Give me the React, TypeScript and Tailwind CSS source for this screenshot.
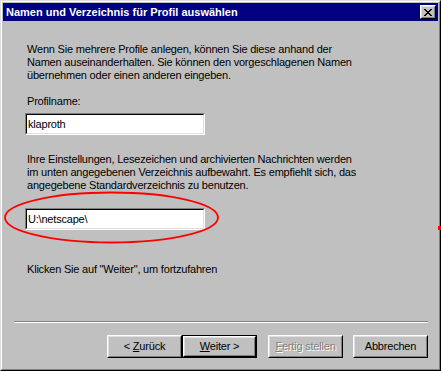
import React from "react";

// Win95-style sunken edit field
function EditField({ value }: { value: string }) {
    return (
        <div className="-ml-[2px] w-[180px] h-[22px] border border-t-[#808080] border-l-[#808080] border-r-white border-b-white">
            <div className="flex h-full items-center border border-t-black border-l-black border-r-[#dfdfdf] border-b-[#dfdfdf] bg-white pl-px">
                {value}
            </div>
        </div>
    );
}

// Raised push button, optional default (black frame) and disabled states
function PushButton({ children, isDefault, disabled, className = "" }: { children: React.ReactNode; isDefault?: boolean; disabled?: boolean; className?: string }) {
    const face = (
        <div className="flex h-full w-full border border-t-white border-l-white border-r-black border-b-black">
            <div className={`flex h-full w-full items-center justify-center border border-t-[#dfdfdf] border-l-[#dfdfdf] border-r-[#808080] border-b-[#808080] ${disabled ? "text-[#808080] [text-shadow:1px_1px_0_#fff]" : ""}`}>
                {children}
            </div>
        </div>
    );
    return (
        <div className={`w-[75px] h-[23px] ${isDefault ? "border border-black" : ""} ${className}`}>
            {face}
        </div>
    );
}

function CloseButton() {
    return (
        <div className="mr-[2px] w-[16px] h-[14px] border border-t-white border-l-white border-r-black border-b-black bg-[#c0c0c0]">
            <div className="flex h-full w-full items-center justify-center border border-t-[#dfdfdf] border-l-[#dfdfdf] border-r-[#808080] border-b-[#808080]">
                <svg width="8" height="7" viewBox="0 0 8 7" shapeRendering="crispEdges">
                    <path d="M0 0h2v1h-2zM6 0h2v1h-2zM1 1h2v1h-2zM5 1h2v1h-2zM2 2h4v1h-4zM3 3h2v1h-2zM2 4h4v1h-4zM1 5h2v1h-2zM5 5h2v1h-2zM0 6h2v1h-2zM6 6h2v1h-2z" fill="#000" />
                </svg>
            </div>
        </div>
    );
}

export default function App() {
    return (
        <div className="relative w-[441px] h-[371px] bg-[#c0c0c0] text-[11px] leading-[13px] text-black font-['Liberation_Sans',Arial,sans-serif] border border-t-[#dfdfdf] border-l-[#dfdfdf] border-r-black border-b-black">
            <div className="flex h-full flex-col border border-t-white border-l-white border-r-[#808080] border-b-[#808080] p-px">
                {/* title bar */}
                <div className="flex h-[18px] shrink-0 items-center justify-between bg-[#000080] pl-[3px]">
                    <span className="font-bold text-white">Namen und Verzeichnis für Profil auswählen</span>
                    <CloseButton />
                </div>

                {/* body */}
                <div className="flex flex-1 flex-col tracking-[-0.2px]">
                    <div className="flex flex-col pl-[24px]">
                        <p className="mt-[22px]">
                            Wenn Sie mehrere Profile anlegen, können Sie diese anhand der<br />
                            Namen auseinanderhalten. Sie können den vorgeschlagenen Namen<br />
                            übernehmen oder einen anderen eingeben.
                        </p>
                        <p className="mt-[13px]">Profilname:</p>
                        <div className="mt-[5px]">
                            <EditField value="klaproth" />
                        </div>
                        <p className="mt-[18px]">
                            Ihre Einstellungen, Lesezeichen und archivierten Nachrichten werden<br />
                            im unten angegebenen Verzeichnis aufbewahrt. Es empfiehlt sich, das<br />
                            angegebene Standardverzeichnis zu benutzen.
                        </p>
                        <div className="mt-[16px]">
                            <EditField value="U:\netscape\" />
                        </div>
                        <p className="mt-[33px]">Klicken Sie auf "Weiter", um fortzufahren</p>
                    </div>

                    {/* etched separator */}
                    <div className="mt-[45px] ml-[11px] mr-[10px] h-[2px] border-t border-t-[#808080] border-b border-b-white" />

                    <div className="mt-[12px] flex justify-end pr-[10px]">
                        <PushButton><span>&lt; <u className="underline-offset-1">Z</u>urück</span></PushButton>
                        <PushButton isDefault><span><u className="underline-offset-1">W</u>eiter &gt;</span></PushButton>
                        <PushButton disabled className="ml-[11px]"><span><u className="underline-offset-1">F</u>ertig stellen</span></PushButton>
                        <PushButton className="ml-[10px]">Abbrechen</PushButton>
                    </div>
                </div>
            </div>

            {/* red hand-drawn highlight around the directory field */}
            <svg className="pointer-events-none absolute left-0 top-0" width="441" height="371">
                <ellipse cx="110.5" cy="216.5" rx="106.5" ry="25" fill="none" stroke="#ff0000" strokeWidth="1.8" />
                <rect x="437" y="225" width="3" height="4" fill="#ff0000" />
            </svg>
        </div>
    );
}
